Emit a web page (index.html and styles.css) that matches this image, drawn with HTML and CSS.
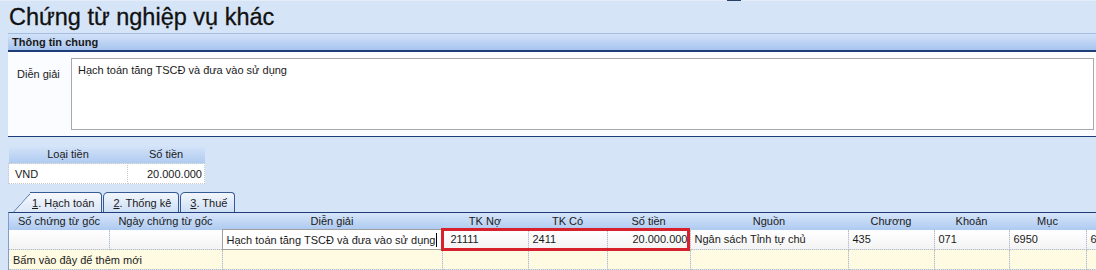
FILE: index.html
```html
<!DOCTYPE html>
<html>
<head>
  <meta charset="utf-8">
  <title>Chứng từ nghiệp vụ khác</title>
  <link rel="stylesheet" href="styles.css">
</head>
<body>
  <div class="topbar"><span class="mark"></span></div>
  <div class="page">
    <h1 class="title">Chứng từ nghiệp vụ khác</h1>

    <div class="group">
      <div class="group-head">Thông tin chung</div>
      <div class="group-body">
        <label class="lbl">Diễn giải</label>
        <div class="memo">Hạch toán tăng TSCĐ và đưa vào sử dụng</div>
      </div>
    </div>

    <table class="money">
      <colgroup><col class="m1"><col class="m2"></colgroup>
      <tr><th>Loại tiền</th><th>Số tiền</th></tr>
      <tr><td>VND</td><td class="num">20.000.000</td></tr>
    </table>

    <div class="tabs">
      <div class="tab first"><u>1</u>. Hạch toán</div>
      <div class="tab"><u>2</u>. Thống kê</div>
      <div class="tab"><u>3</u>. Thuế</div>
    </div>

    <div class="grid-wrap">
      <table class="grid">
        <colgroup>
          <col style="width:100px"><col style="width:113px"><col style="width:220px">
          <col style="width:86px"><col style="width:79px"><col style="width:83px">
          <col style="width:158px"><col style="width:86px"><col style="width:75px">
          <col style="width:77px"><col style="width:100px">
        </colgroup>
        <tr class="head">
          <th>Số chứng từ gốc</th><th>Ngày chứng từ gốc</th><th>Diễn giải</th>
          <th>TK Nợ</th><th>TK Có</th><th>Số tiền</th><th>Nguồn</th>
          <th>Chương</th><th>Khoản</th><th>Mục</th><th>Tiểu mục</th>
        </tr>
        <tr class="row">
          <td></td><td></td>
          <td class="edit">Hạch toán tăng TSCĐ và đưa vào sử dụng<span class="caret"></span></td>
          <td class="tk">21111</td><td>2411</td><td class="num">20.000.000</td>
          <td>Ngân sách Tỉnh tự chủ</td><td>435</td><td>071</td><td>6950</td><td>6954</td>
        </tr>
        <tr class="new">
          <td colspan="2">Bấm vào đây để thêm mới</td><td></td>
          <td></td><td></td><td></td><td></td><td></td><td></td><td></td><td></td>
        </tr>
      </table>
      <div class="mark-red"></div>
    </div>
  </div>
</body>
</html>
```

FILE: styles.css
```css
body {
  margin: 0;
  background: #d6e4f7;
  font-family: "Liberation Sans", Arial, sans-serif;
  font-size: 11px;
  color: #1a1a1a;
  overflow: hidden;
}

table {
  font: inherit;
}

.topbar {
  height: 1px;
  background: #e4ecf8;
  position: relative;
}

.topbar .mark {
  position: absolute;
  left: 727px;
  top: 0;
  width: 14px;
  height: 1px;
  background: #2a3f6a;
}

.page {
  padding-left: 8px;
}

.title {
  margin: 0;
  height: 32px;
  line-height: 32px;
  font-size: 23.5px;
  font-weight: normal;
  color: #111;
  padding-left: 1px;
  -webkit-text-stroke: 0.3px #111;
}

/* thong tin chung */
.group-head {
  height: 16px;
  line-height: 16px;
  border-top: 1px solid #a4bde2;
  border-bottom: 2px solid #1f3d78;
  background: linear-gradient(#d2e2f8, #a8c5ef);
  font-weight: bold;
  padding-left: 4px;
}

.group-body {
  display: flex;
  height: 72px;
  padding: 6px 2px 6px 0;
  background: #fafcff;
  border-bottom: 1px solid #1f3d78;
}

.lbl {
  width: 63px;
  padding: 10px 0 0 9px;
  box-sizing: border-box;
}

.memo {
  flex: 1;
  border: 1px solid #a8a8a8;
  background: #fff;
  padding: 5px 6px;
}

/* loai tien */
.money {
  margin-top: 8px;
  border-collapse: collapse;
  table-layout: fixed;
  width: 196px;
}

.m1 { width: 119px; }
.m2 { width: 77px; }

.money th {
  height: 18px;
  padding: 0;
  font-weight: normal;
  background: linear-gradient(#d6e5f9, #b0cbf1);
}

.money td {
  height: 19px;
  padding: 0 2px 0 6px;
  background: #fff;
  border: 1px dotted #c8c8c8;
}

.num {
  text-align: right;
}

/* tabs */
.tabs {
  display: flex;
  height: 20px;
  margin-top: 8px;
  padding-left: 22px;
  gap: 1px;
}

.tab {
  position: relative;
  height: 19px;
  line-height: 20px;
  padding: 0 7px 0 9px;
  border: 1px solid #365a94;
  border-bottom: none;
  border-radius: 5px 4px 0 0;
  background: linear-gradient(#f2f6fc, #cddff5);
}

.tab.first {
  border-left: none;
  border-radius: 0 4px 0 0;
  padding-left: 2px;
  background: linear-gradient(#f7f9fd, #dbe6f6);
}

.tab.first::before {
  content: "";
  position: absolute;
  left: -18px;
  top: -1px;
  width: 22px;
  height: 20px;
  border-left: 1px solid #365a94;
  border-top: 1px solid #365a94;
  border-radius: 4px 0 0 0;
  transform: skewX(-42deg);
  transform-origin: bottom left;
  background: linear-gradient(#f7f9fd, #dbe6f6);
  z-index: -1;
}

.tab u {
  text-decoration: underline;
}

/* luoi hach toan */
.grid-wrap {
  position: relative;
  overflow: hidden;
  border-top: 1px solid #1f3d78;
  border-left: 1px solid #7f9ccc;
  height: 60px;
}

.grid {
  border-collapse: collapse;
  table-layout: fixed;
  width: 1177px;
}

.grid th {
  height: 16px;
  padding: 0;
  font-weight: normal;
  white-space: nowrap;
  background: linear-gradient(#d6e5f9, #aecaf1);
}

.grid td {
  height: 19px;
  padding: 0 2px 0 4px;
  white-space: nowrap;
  overflow: hidden;
  border-right: 1px dotted #bdbdbd;
  border-bottom: 1px dotted #bdbdbd;
}

.row td {
  background: linear-gradient(#ffffff, #f3f3f3);
}

.row td.edit {
  border: 1px solid #a0a0a0;
  background: #fff;
}

.row td.tk {
  padding-left: 8px;
}

.caret {
  display: inline-block;
  width: 1px;
  height: 14px;
  background: #000;
  vertical-align: -3px;
  margin-left: 1px;
}

.new td {
  background: #fffbe2;
}

.mark-red {
  position: absolute;
  left: 432px;
  top: 15px;
  width: 243px;
  height: 17px;
  border: 3px solid #d7212d;
}
```
